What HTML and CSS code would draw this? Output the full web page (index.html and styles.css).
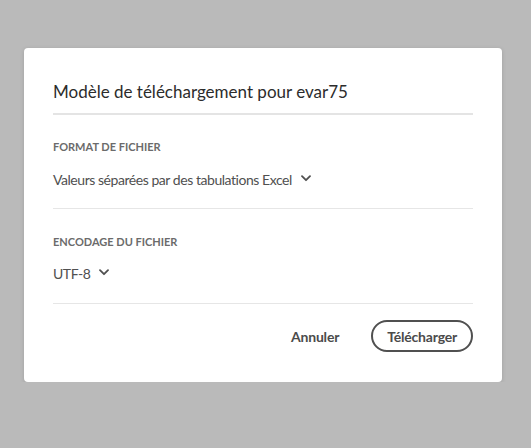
FILE: index.html
```html
<!DOCTYPE html>
<html lang="fr">
<head>
  <meta charset="UTF-8" />
  <title>Modèle de téléchargement</title>
  <link rel="stylesheet" href="styles.css">
</head>
<body>
  <div class="dialog">
    <h2 class="dialog-title">Modèle de téléchargement pour evar75</h2>
    <div class="field">
      <div class="field-label">FORMAT DE FICHIER</div>
      <div class="picker">
        <span>Valeurs séparées par des tabulations Excel</span>
        <svg class="chevron" width="10" height="7" viewBox="0 0 10 7"><path d="M1 1.2 L5 5.2 L9 1.2" fill="none" stroke="#505050" stroke-width="1.8" stroke-linecap="round" stroke-linejoin="round"/></svg>
      </div>
    </div>
    <div class="field second">
      <div class="field-label">ENCODAGE DU FICHIER</div>
      <div class="picker">
        <span>UTF-8</span>
        <svg class="chevron" width="10" height="7" viewBox="0 0 10 7"><path d="M1 1.2 L5 5.2 L9 1.2" fill="none" stroke="#505050" stroke-width="1.8" stroke-linecap="round" stroke-linejoin="round"/></svg>
      </div>
    </div>
    <div class="actions">
      <button class="btn-quiet">Annuler</button>
      <button class="btn-outline">Télécharger</button>
    </div>
  </div>
</body>
</html>
```

FILE: styles.css
```css
body {
  margin: 0;
  background: #bababa;
  font-family: Lato, "Open Sans", sans-serif;
  padding: 48px 29px 0 24px;
}
.dialog {
  background: white;
  border-radius: 4px;
  box-shadow: 0 1px 4px rgba(0, 0, 0, 0.15);
  padding: 0 29px 30px 29px;
  height: 334px;
  box-sizing: border-box;
}
.dialog-title {
  margin: 0;
  font-size: 17px;
  font-weight: normal;
  color: #2c2c2c;
  height: 67px;
  line-height: 20px;
  padding-top: 34px;
  box-sizing: border-box;
  border-bottom: 2px solid #e4e4e4;
}
.field {
  border-bottom: 1px solid #e6e6e6;
  height: 94px;
  box-sizing: border-box;
  padding-top: 25px;
}
.field.second {
  height: 95px;
  padding-top: 26px;
}
.field-label {
  font-size: 11px;
  font-weight: bold;
  color: #6b6b6b;
  line-height: 14px;
}
.picker {
  margin-top: 17px;
  display: flex;
  align-items: center;
  gap: 9px;
  font-size: 14px;
  letter-spacing: -0.45px;
  color: #505050;
  line-height: 18px;
}
.second .picker {
  margin-top: 16px;
}
.chevron {
  margin-top: -3px;
}
.actions {
  display: flex;
  justify-content: flex-end;
  align-items: center;
  gap: 32px;
  padding-top: 16px;
}
.actions button {
  font-family: inherit;
  font-size: 14px;
  font-weight: bold;
  letter-spacing: -0.2px;
  color: #4b4b4b;
  cursor: pointer;
}
.btn-quiet {
  background: none;
  border: none;
  padding: 0;
}
.btn-outline {
  background: white;
  border: 2px solid #505050;
  border-radius: 16px;
  height: 32px;
  padding: 0 14px;
}
```
